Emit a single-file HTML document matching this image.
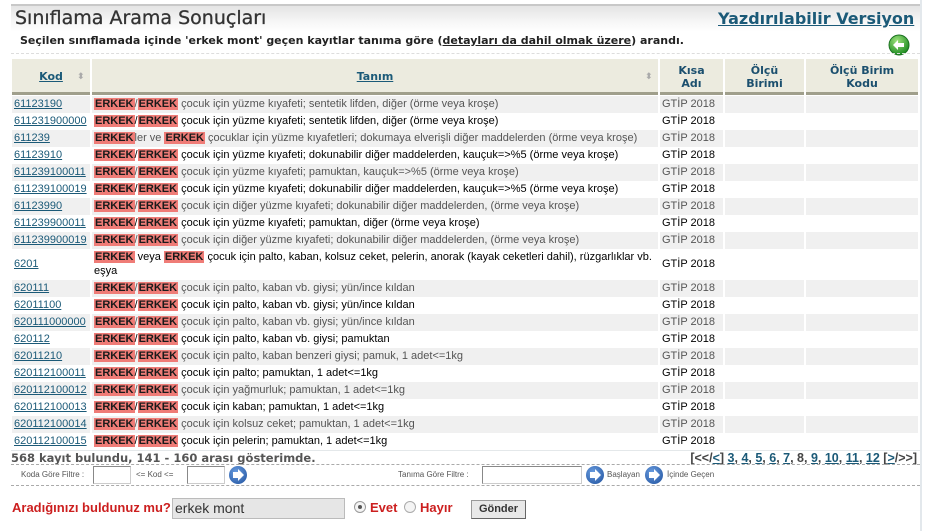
<!DOCTYPE html>
<html><head><meta charset="utf-8"><style>
*{margin:0;padding:0;box-sizing:border-box}
body{width:936px;height:531px;background:#fff;font-family:"Liberation Sans","DejaVu Sans",sans-serif;position:relative;overflow:hidden;color:#000}
.a{position:absolute}
.side{left:920px;top:0;width:2px;height:531px;background:#e3e8ec}
.topl{left:11px;top:4px;width:909px;height:2px;background:#c8c8c8}
.band{left:11px;top:6px;width:909px;height:26px;background:linear-gradient(#e4e4e4,#f6f6f6 60%,#fff)}
h1{position:absolute;left:15px;top:7px;font-size:19px;font-weight:normal;color:#333;font-family:"DejaVu Sans",sans-serif;-webkit-text-stroke:0.3px #333}
.yv{left:718px;top:9px;font-size:16px;font-weight:bold;color:#1b5a78;text-decoration:underline;font-family:"DejaVu Sans",sans-serif;white-space:nowrap}
.sub{left:20px;top:34px;font-weight:bold;color:#222;font-family:"DejaVu Sans",sans-serif;font-size:11px}
.sub u{color:#222}
.dl{left:11px;top:53px;width:909px;border-top:1px dashed #ddd}
.hd{top:59px;height:36px;background:#ecebdf;border-bottom:3px solid #a09f8c;font-size:11px;font-weight:bold;color:#1b4f6e;text-align:center;font-family:"DejaVu Sans",sans-serif;line-height:13px}
.hd u{color:#1b5a78}
.r{position:absolute;left:12px;width:906px;height:17px;font-size:11px;line-height:17px}
.r div{position:absolute;top:0;height:100%;padding-left:2px;white-space:nowrap}
.g div{background:#f0f0f0;color:#555}
.c1{left:0;width:78px}.c2{left:80px;width:566px}.c3{left:648px;width:63px}.c4{left:713px;width:79px}.c5{left:794px;width:112px}
.c1{color:#1b5a78!important;text-decoration:underline}
b.e{background:#ef7c77;color:#1a1a1a;font-weight:bold;padding:0 1px}
.pg{right:19px;top:451px;font-weight:bold;color:#444;font-family:"Liberation Sans",sans-serif;font-size:12.5px;white-space:nowrap}
.pg u{color:#1b5a78}
.cnt{left:11px;top:451px;font-size:11.5px;font-weight:bold;color:#555;font-family:"DejaVu Sans",sans-serif}
.fl{left:11px;top:464px;width:909px;height:22px;border-top:1px dashed #aaa;border-bottom:1px dashed #aaa;font-size:8px;color:#555}
.fl span,.fl i,.fl input{position:absolute}
.fl input{height:18px;top:1px;border:1px solid #ccc;border-top-color:#888;border-left-color:#888;background:#fff}
.btn{width:18px;height:18px;border-radius:50%;background:radial-gradient(circle at 40% 35%,#6a9de0,#1d4f9c);top:1px}
.btn:after{content:"";position:absolute;left:4px;top:6px;width:6px;height:6px;background:#fff}
.btn:before{content:"";position:absolute;left:9px;top:3px;border-left:6px solid #fff;border-top:6px solid transparent;border-bottom:6px solid transparent}
.q{left:12px;top:500px;font-size:13px;font-weight:bold;color:#cc1f1f}
</style></head><body>
<div class="a side"></div>
<div class="a topl"></div>
<div class="a band"></div>
<h1>Sınıflama Arama Sonuçları</h1>
<div class="a yv">Yazdırılabilir Versiyon</div>
<div class="a sub">Seçilen sınıflamada içinde 'erkek mont' geçen kayıtlar tanıma göre (<u>detayları da dahil olmak üzere</u>) arandı.</div>
<svg class="a" style="left:888px;top:34px" width="22" height="22" viewBox="0 0 22 22"><defs><radialGradient id="gg" cx="40%" cy="30%" r="70%"><stop offset="0" stop-color="#9ee27c"/><stop offset="1" stop-color="#1e8c22"/></radialGradient></defs><circle cx="11" cy="11" r="10" fill="url(#gg)" stroke="#1a7020"/><path d="M5 11 L10 6 L10 9 L16 9 L16 13 L10 13 L10 16 Z" fill="#fff"/></svg>
<div class="a dl"></div>
<div class="a hd" style="left:12px;width:78px;padding-top:11px"><u>Kod</u><span style="position:absolute;left:65px;top:12px;color:#aaa;font-size:9px">⬍</span></div>
<div class="a hd" style="left:92px;width:566px;padding-top:11px"><u>Tanım</u><span style="position:absolute;left:553px;top:12px;color:#aaa;font-size:9px">⬍</span></div>
<div class="a hd" style="left:660px;width:63px;padding-top:5px">Kısa<br>Adı</div>
<div class="a hd" style="left:725px;width:79px;padding-top:5px">Ölçü<br>Birimi</div>
<div class="a hd" style="left:806px;width:112px;padding-top:5px">Ölçü Birim<br>Kodu</div>

<div class="r g" style="top:96px"><div class="c1">61123190</div><div class="c2"><b class="e">ERKEK</b>/<b class="e">ERKEK</b> çocuk için yüzme kıyafeti; sentetik lifden, diğer (örme veya kroşe)</div><div class="c3">GTİP 2018</div><div class="c4"></div><div class="c5"></div></div>
<div class="r" style="top:113px"><div class="c1">611231900000</div><div class="c2"><b class="e">ERKEK</b>/<b class="e">ERKEK</b> çocuk için yüzme kıyafeti; sentetik lifden, diğer (örme veya kroşe)</div><div class="c3">GTİP 2018</div></div>
<div class="r g" style="top:130px"><div class="c1">611239</div><div class="c2"><b class="e">ERKEK</b>ler ve <b class="e">ERKEK</b> çocuklar için yüzme kıyafetleri; dokumaya elverişli diğer maddelerden (örme veya kroşe)</div><div class="c3">GTİP 2018</div><div class="c4"></div><div class="c5"></div></div>
<div class="r" style="top:147px"><div class="c1">61123910</div><div class="c2"><b class="e">ERKEK</b>/<b class="e">ERKEK</b> çocuk için yüzme kıyafeti; dokunabilir diğer maddelerden, kauçuk=&gt;%5 (örme veya kroşe)</div><div class="c3">GTİP 2018</div></div>
<div class="r g" style="top:164px"><div class="c1">611239100011</div><div class="c2"><b class="e">ERKEK</b>/<b class="e">ERKEK</b> çocuk için yüzme kıyafeti; pamuktan, kauçuk=&gt;%5 (örme veya kroşe)</div><div class="c3">GTİP 2018</div><div class="c4"></div><div class="c5"></div></div>
<div class="r" style="top:181px"><div class="c1">611239100019</div><div class="c2"><b class="e">ERKEK</b>/<b class="e">ERKEK</b> çocuk için yüzme kıyafeti; dokunabilir diğer maddelerden, kauçuk=&gt;%5 (örme veya kroşe)</div><div class="c3">GTİP 2018</div></div>
<div class="r g" style="top:198px"><div class="c1">61123990</div><div class="c2"><b class="e">ERKEK</b>/<b class="e">ERKEK</b> çocuk için diğer yüzme kıyafeti; dokunabilir diğer maddelerden, (örme veya kroşe)</div><div class="c3">GTİP 2018</div><div class="c4"></div><div class="c5"></div></div>
<div class="r" style="top:215px"><div class="c1">611239900011</div><div class="c2"><b class="e">ERKEK</b>/<b class="e">ERKEK</b> çocuk için yüzme kıyafeti; pamuktan, diğer (örme veya kroşe)</div><div class="c3">GTİP 2018</div></div>
<div class="r g" style="top:232px"><div class="c1">611239900019</div><div class="c2"><b class="e">ERKEK</b>/<b class="e">ERKEK</b> çocuk için diğer yüzme kıyafeti; dokunabilir diğer maddelerden, (örme veya kroşe)</div><div class="c3">GTİP 2018</div><div class="c4"></div><div class="c5"></div></div>
<div class="r" style="top:249px;height:31px"><div class="c1" style="line-height:31px">6201</div><div class="c2" style="white-space:normal;line-height:14px;padding-top:1px"><b class="e">ERKEK</b> veya <b class="e">ERKEK</b> çocuk için palto, kaban, kolsuz ceket, pelerin, anorak (kayak ceketleri dahil), rüzgarlıklar vb. eşya</div><div class="c3" style="line-height:31px">GTİP 2018</div></div>
<div class="r g" style="top:280px"><div class="c1">620111</div><div class="c2"><b class="e">ERKEK</b>/<b class="e">ERKEK</b> çocuk için palto, kaban vb. giysi; yün/ince kıldan</div><div class="c3">GTİP 2018</div><div class="c4"></div><div class="c5"></div></div>
<div class="r" style="top:297px"><div class="c1">62011100</div><div class="c2"><b class="e">ERKEK</b>/<b class="e">ERKEK</b> çocuk için palto, kaban vb. giysi; yün/ince kıldan</div><div class="c3">GTİP 2018</div></div>
<div class="r g" style="top:314px"><div class="c1">620111000000</div><div class="c2"><b class="e">ERKEK</b>/<b class="e">ERKEK</b> çocuk için palto, kaban vb. giysi; yün/ince kıldan</div><div class="c3">GTİP 2018</div><div class="c4"></div><div class="c5"></div></div>
<div class="r" style="top:331px"><div class="c1">620112</div><div class="c2"><b class="e">ERKEK</b>/<b class="e">ERKEK</b> çocuk için palto, kaban vb. giysi; pamuktan</div><div class="c3">GTİP 2018</div></div>
<div class="r g" style="top:348px"><div class="c1">62011210</div><div class="c2"><b class="e">ERKEK</b>/<b class="e">ERKEK</b> çocuk için palto, kaban benzeri giysi; pamuk, 1 adet&lt;=1kg</div><div class="c3">GTİP 2018</div><div class="c4"></div><div class="c5"></div></div>
<div class="r" style="top:365px"><div class="c1">620112100011</div><div class="c2"><b class="e">ERKEK</b>/<b class="e">ERKEK</b> çocuk için palto; pamuktan, 1 adet&lt;=1kg</div><div class="c3">GTİP 2018</div></div>
<div class="r g" style="top:382px"><div class="c1">620112100012</div><div class="c2"><b class="e">ERKEK</b>/<b class="e">ERKEK</b> çocuk için yağmurluk; pamuktan, 1 adet&lt;=1kg</div><div class="c3">GTİP 2018</div><div class="c4"></div><div class="c5"></div></div>
<div class="r" style="top:399px"><div class="c1">620112100013</div><div class="c2"><b class="e">ERKEK</b>/<b class="e">ERKEK</b> çocuk için kaban; pamuktan, 1 adet&lt;=1kg</div><div class="c3">GTİP 2018</div></div>
<div class="r g" style="top:416px"><div class="c1">620112100014</div><div class="c2"><b class="e">ERKEK</b>/<b class="e">ERKEK</b> çocuk için kolsuz ceket; pamuktan, 1 adet&lt;=1kg</div><div class="c3">GTİP 2018</div><div class="c4"></div><div class="c5"></div></div>
<div class="r" style="top:433px"><div class="c1">620112100015</div><div class="c2"><b class="e">ERKEK</b>/<b class="e">ERKEK</b> çocuk için pelerin; pamuktan, 1 adet&lt;=1kg</div><div class="c3">GTİP 2018</div></div>
<div class="a" style="left:11px;top:450px;width:909px;border-top:1px solid #e4e8ea"></div>

<div class="a cnt">568 kayıt bulundu, 141 - 160 arası gösterimde.</div>
<div class="a pg">[&lt;&lt;/<u>&lt;</u>] <u>3</u>, <u>4</u>, <u>5</u>, <u>6</u>, <u>7</u>, 8, <u>9</u>, <u>10</u>, <u>11</u>, <u>12</u> [<u>&gt;</u>/&gt;&gt;]</div>
<div class="a fl">
<span style="left:10px;top:5px">Koda Göre Filtre :</span>
<input style="left:82px;width:38px">
<span style="left:125px;top:5px">&lt;= Kod &lt;=</span>
<input style="left:176px;width:38px">
<i class="btn" style="left:218px"></i>
<span style="left:387px;top:5px">Tanıma Göre Filtre :</span>
<input style="left:471px;width:100px">
<i class="btn" style="left:575px"></i>
<span style="left:596px;top:5px">Başlayan</span>
<i class="btn" style="left:634px"></i>
<span style="left:656px;top:5px">İçinde Geçen</span>
</div>

<div class="a q">Aradığınızı buldunuz mu?</div>
<div class="a" style="left:172px;top:498px;width:173px;height:21px;background:#e6e6e6;border:1px solid #bbb;font-size:14px;line-height:19px;padding-left:2px;color:#333">erkek mont</div>
<div class="a" style="left:354px;top:501px;width:12px;height:12px;border-radius:50%;border:1px solid #999;background:#f4f4f4"><div style="position:absolute;left:3px;top:3px;width:4px;height:4px;border-radius:50%;background:#555"></div></div>
<div class="a q" style="left:370px">Evet</div>
<div class="a" style="left:404px;top:501px;width:12px;height:12px;border-radius:50%;border:1px solid #aaa;background:#f4f4f4"></div>
<div class="a q" style="left:420px">Hayır</div>
<div class="a" style="left:471px;top:500px;width:55px;height:19px;background:#e8e8e8;border:1px solid #999;border-right-color:#666;border-bottom-color:#666;font-size:11px;font-weight:bold;text-align:center;line-height:17px;color:#333">Gönder</div>
</body></html>
